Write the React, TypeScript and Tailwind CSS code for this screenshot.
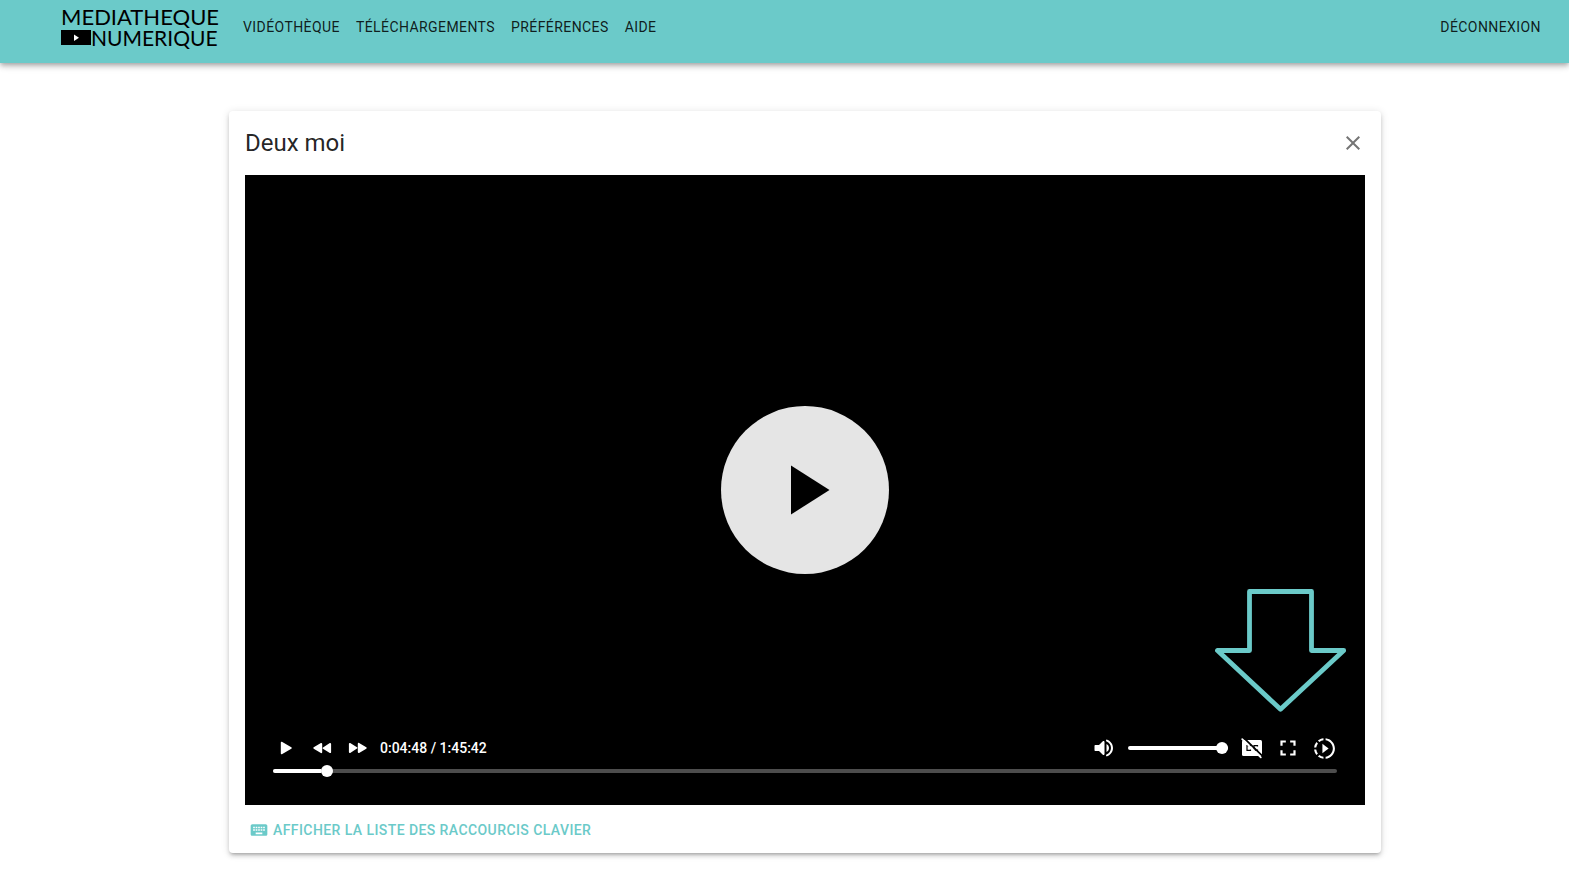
import { useState } from 'react';
import type { ReactNode } from 'react';
import { MdClose, MdFullscreen, MdKeyboard, MdSlowMotionVideo } from 'react-icons/md';

const DURATION = 6342;

const links = ['Vidéothèque', 'Téléchargements', 'Préférences', 'Aide'];

function formatTime(total: number) {
  const hours = Math.floor(total / 3600);
  const minutes = Math.floor((total % 3600) / 60);
  const seconds = total % 60;
  return `${hours}:${String(minutes).padStart(2, '0')}:${String(seconds).padStart(2, '0')}`;
}

function Logo() {
  return (
    <a
      href="#"
      className="flex w-[158px] flex-col font-[Lato,sans-serif] text-[22px] leading-[21px] whitespace-nowrap text-black"
    >
      <span>MEDIATHEQUE</span>
      <span className="flex items-center text-[21px]">
        <svg viewBox="0 0 30 15" className="h-[15px] w-[30px] shrink-0" aria-hidden="true">
          <rect width="30" height="15" fill="#000" />
          <path d="M13 4.500v6.600l5-3.300z" fill="#fff" />
        </svg>
        <span>NUMERIQUE</span>
      </span>
    </a>
  );
}

function ControlButton({ label, children }: { label: string; children: ReactNode }) {
  return (
    <button type="button" aria-label={label} className="flex size-9 items-center justify-center text-white">
      {children}
    </button>
  );
}

function Range({
  label,
  value,
  max,
  onChange,
  className,
}: {
  label: string;
  value: number;
  max: number;
  onChange: (value: number) => void;
  className: string;
}) {
  const percent = (value / max) * 100;
  return (
    <div className={`relative flex h-3 items-center ${className}`}>
      <div className="h-1 w-full overflow-hidden rounded-full bg-[#4d4d4d]">
        <div className="h-full bg-white" style={{ width: `${percent}%` }} />
      </div>
      <input
        type="range"
        aria-label={label}
        min={0}
        max={max}
        value={value}
        onChange={(event) => onChange(Number(event.target.value))}
        className="absolute inset-0 h-3 w-full cursor-pointer appearance-none bg-transparent [&::-webkit-slider-thumb]:size-3 [&::-webkit-slider-thumb]:appearance-none [&::-webkit-slider-thumb]:rounded-full [&::-webkit-slider-thumb]:bg-white"
      />
    </div>
  );
}

function PlayIcon() {
  return (
    <svg viewBox="0 0 24 24" className="size-6" fill="currentColor" aria-hidden="true">
      <path d="M6.800 6.800v10.400c0 .8.900 1.300 1.500.8l9-5.200c.6-.4.600-1.200 0-1.600l-9-5.200C7.700 5.600 6.800 6 6.800 6.800z" />
    </svg>
  );
}

function ForwardIcon() {
  return (
    <svg viewBox="0 0 24 24" className="size-6" fill="currentColor" aria-hidden="true">
      <path d="M4.200 16.900l6.800-4.300c.5-.4.500-1 0-1.300L4.200 7C3.600 6.700 2.900 7.100 2.900 7.800v8.300c0 .7.700 1.100 1.300.8zM11.800 7.800v8.300c0 .7.700 1.100 1.300.8l7.200-4.200c.5-.4.500-1 0-1.400L13.100 7c-.6-.4-1.300 0-1.300.8z" />
    </svg>
  );
}

function VolumeIcon() {
  return (
    <svg viewBox="0 0 24 24" className="size-6" fill="currentColor" aria-hidden="true">
      <path d="M2.500 10v4c0 .6.400 1 1 1H7l3.800 3.800c.6.600 1.700.2 1.700-.7V5.900c0-.9-1.100-1.300-1.700-.7L7 9H3.500c-.6 0-1 .4-1 1zm14.500 2c0-1.800-1-3.300-2.500-4v8c1.500-.7 2.500-2.200 2.500-4zM14 4.500v.2c0 .4.200.700.6.900C17.100 6.600 19 9.100 19 12s-1.900 5.400-4.400 6.400c-.4.200-.6.500-.6.900v.2c0 .6.600 1.100 1.200.8 3.400-1.300 5.800-4.500 5.800-8.300s-2.400-7-5.800-8.300c-.6-.3-1.200.2-1.200.8z" />
    </svg>
  );
}

function CaptionsOffIcon() {
  return (
    <svg viewBox="0 0 24 24" className="size-6" aria-hidden="true">
      <rect x="2" y="4" width="20" height="16" rx="1.500" fill="#fff" />
      <path
        d="M10.500 10.500V9.700H7v4.600h3.500v-.8M17.500 10.500V9.700H14v4.600h3.500v-.8"
        fill="none"
        stroke="#000"
        strokeWidth="1.200"
      />
      <path d="M3.500 1.600l18.600 18.100" stroke="#000" strokeWidth="1.800" />
      <path d="M2.200 3.200l18.600 18.100" stroke="#fff" strokeWidth="1.800" strokeLinecap="round" />
    </svg>
  );
}

export default function App() {
  const [position, setPosition] = useState(288);
  const [volume, setVolume] = useState(100);

  return (
    <div className="min-h-screen bg-white font-[Roboto,sans-serif] text-black/87">
      <header className="relative flex items-center bg-[#6bcac9] pt-1.5 pr-7 pb-[15px] pl-[61px] shadow-[0_2px_4px_-1px_rgba(0,0,0,0.2),0_4px_5px_0_rgba(0,0,0,0.14),0_1px_10px_0_rgba(0,0,0,0.12)]">
        <Logo />
        <nav className="ml-6 flex flex-1 items-center gap-4 text-sm tracking-[0.03em] text-black/87 uppercase">
          {links.map((link) => (
            <a key={link} href="#">
              {link}
            </a>
          ))}
          <a href="#" className="ml-auto">
            Déconnexion
          </a>
        </nav>
      </header>

      <main className="pt-12 pb-10 pl-[41px]">
        <section className="mx-auto max-w-[1152px] rounded bg-white px-4 shadow-[0_3px_3px_-2px_rgba(0,0,0,0.2),0_3px_4px_0_rgba(0,0,0,0.14),0_1px_8px_0_rgba(0,0,0,0.12)]">
          <div className="flex h-16 items-center justify-between">
            <h1 className="text-2xl font-normal">Deux moi</h1>
            <button type="button" aria-label="Fermer" className="flex size-6 items-center justify-center text-[#757575]">
              <MdClose size={24} />
            </button>
          </div>

          <div className="relative flex aspect-video flex-col justify-end bg-black pb-7">
            <div className="absolute inset-0 flex items-center justify-center">
              <button
                type="button"
                aria-label="Lire la vidéo"
                className="flex size-[168px] items-center justify-center rounded-full bg-[#e5e5e5]"
              >
                <svg viewBox="0 0 168 168" className="size-full" aria-hidden="true">
                  <path d="M70 59.500v49l38.500-24.500z" fill="#000" />
                </svg>
              </button>
            </div>

            <svg
              viewBox="0 0 132 124"
              className="absolute right-[18px] bottom-[92px] h-[124px] w-[132px]"
              fill="none"
              stroke="#6bcac9"
              strokeWidth="4.800"
              strokeLinejoin="round"
              aria-hidden="true"
            >
              <path d="M34.500 2.500h62v59h32.200L65.500 120.300 2.500 61.500h32z" />
            </svg>

            <div className="relative -mb-px flex items-center px-[23px] text-white">
              <ControlButton label="Lecture">
                <PlayIcon />
              </ControlButton>
              <ControlButton label="Reculer">
                <span className="rotate-180">
                  <ForwardIcon />
                </span>
              </ControlButton>
              <ControlButton label="Avancer">
                <ForwardIcon />
              </ControlButton>
              <span className="ml-1 text-sm font-medium">
                {formatTime(position)} / {formatTime(DURATION)}
              </span>
              <div className="ml-auto flex items-center">
                <ControlButton label="Couper le son">
                  <VolumeIcon />
                </ControlButton>
                <Range label="Volume" value={volume} max={100} onChange={setVolume} className="mx-1.5 w-[100px]" />
                <ControlButton label="Sous-titres">
                  <CaptionsOffIcon />
                </ControlButton>
                <ControlButton label="Plein écran">
                  <MdFullscreen size={26} />
                </ControlButton>
                <ControlButton label="Vitesse de lecture">
                  <MdSlowMotionVideo size={25} />
                </ControlButton>
              </div>
            </div>
            <Range label="Position" value={position} max={DURATION} onChange={setPosition} className="mx-7" />
          </div>

          <div className="flex h-12 items-center pt-0.5 pl-1">
            <button
              type="button"
              className="flex items-center gap-1 text-sm font-medium tracking-[0.03em] text-[#6bcac9] uppercase"
            >
              <MdKeyboard size={20} />
              Afficher la liste des raccourcis clavier
            </button>
          </div>
        </section>
      </main>
    </div>
  );
}
